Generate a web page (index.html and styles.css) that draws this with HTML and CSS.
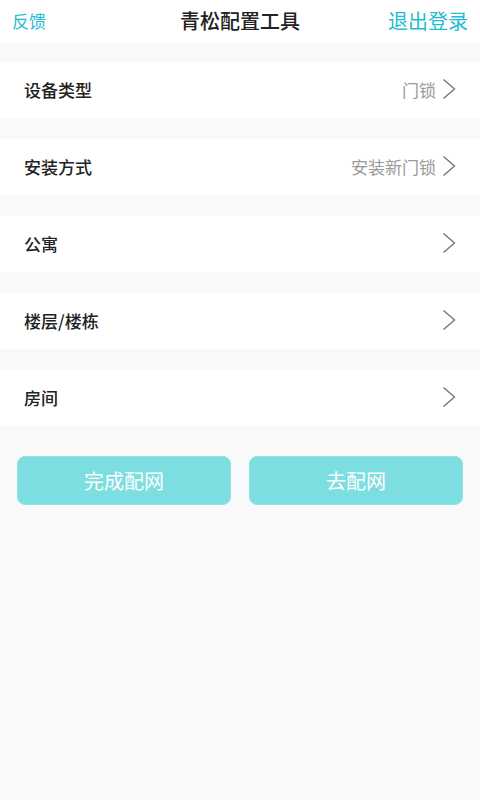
FILE: index.html
```html
<!DOCTYPE html>
<html lang="zh-CN">
<head>
    <meta charset="UTF-8">
    <meta name="viewport" content="width=device-width, initial-scale=1.0">
    <title>青松配置工具</title>
    <link rel="stylesheet" href="styles.css">
</head>
<body>
    <header class="top-bar">
        <a class="top-link feedback">反馈</a>
        <h1 class="top-title">青松配置工具</h1>
        <a class="top-link logout">退出登录</a>
    </header>

    <div class="list">
        <div class="row">
            <span class="row-label">设备类型</span>
            <span class="row-value">门锁</span>
            <svg class="chevron" viewBox="0 0 14 22"><path d="M1.5 1.5 L12.5 11 L1.5 20.5"/></svg>
        </div>
        <div class="row">
            <span class="row-label">安装方式</span>
            <span class="row-value">安装新门锁</span>
            <svg class="chevron" viewBox="0 0 14 22"><path d="M1.5 1.5 L12.5 11 L1.5 20.5"/></svg>
        </div>
        <div class="row">
            <span class="row-label">公寓</span>
            <span class="row-value"></span>
            <svg class="chevron" viewBox="0 0 14 22"><path d="M1.5 1.5 L12.5 11 L1.5 20.5"/></svg>
        </div>
        <div class="row">
            <span class="row-label">楼层/楼栋</span>
            <span class="row-value"></span>
            <svg class="chevron" viewBox="0 0 14 22"><path d="M1.5 1.5 L12.5 11 L1.5 20.5"/></svg>
        </div>
        <div class="row">
            <span class="row-label">房间</span>
            <span class="row-value"></span>
            <svg class="chevron" viewBox="0 0 14 22"><path d="M1.5 1.5 L12.5 11 L1.5 20.5"/></svg>
        </div>
    </div>

    <div class="button-container">
        <button class="action-button">完成配网</button>
        <button class="action-button">去配网</button>
    </div>
</body>
</html>
```
FILE: styles.css
```css
/* Page */
body {
    margin: 0;
    padding: 0;
    background-color: #f9f9f9;
    font-family: "Noto Sans CJK SC", "Noto Sans", sans-serif;
    color: #222;
}

/* Top bar */
.top-bar {
    height: 43px;
    background-color: #fff;
    display: grid;
    grid-template-columns: 1fr auto 1fr;
    align-items: center;
    padding: 0 12px 2px;
    box-sizing: border-box;
}

.top-title {
    margin: 0;
    font-size: 20px;
    font-weight: 500;
    color: #222;
}

.top-link {
    color: #1ebcd3;
    font-size: 17px;
}

.logout {
    font-size: 20px;
    justify-self: end;
}

/* List rows */
.list {
    display: flex;
    flex-direction: column;
    gap: 21px;
    padding-top: 19px;
}

.row {
    height: 56px;
    background-color: #fff;
    display: flex;
    align-items: center;
    padding: 0 24px 2px;
    box-sizing: border-box;
}

.row-label {
    flex: 1;
    font-size: 17px;
    font-weight: 500;
    color: #222;
}

.row-value {
    font-size: 17px;
    color: #9a9a9a;
    margin-right: 6px;
}

.chevron {
    width: 14px;
    height: 22px;
    fill: none;
    stroke: #777;
    stroke-width: 1.4;
}

/* Bottom buttons */
.button-container {
    display: flex;
    gap: 18px;
    padding: 30px 17px 0;
}

.action-button {
    flex: 1;
    height: 49px;
    border: 1px solid #8ee4e6;
    border-radius: 8px;
    background-color: #7cdee1;
    color: #fff;
    font-family: inherit;
    font-size: 20px;
}
```
